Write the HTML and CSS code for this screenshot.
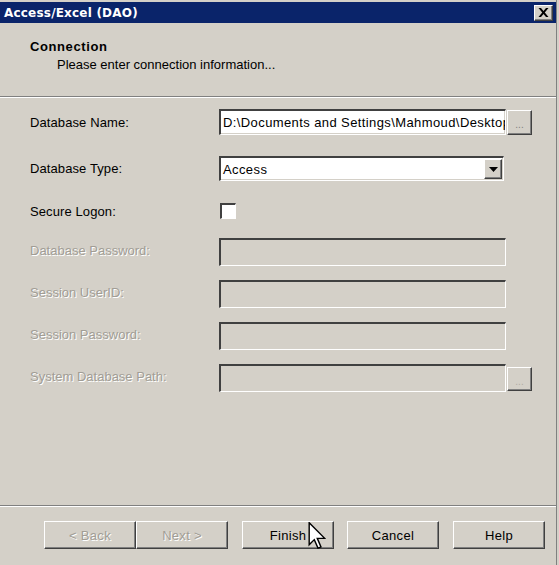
FILE: index.html
```html
<!DOCTYPE html>
<html>
<head>
<meta charset="utf-8">
<link rel="stylesheet" href="styles.css">
</head>
<body>
<div class="window">
  <div class="titlebar">
    <span class="title">Access/Excel (DAO)</span>
    <span class="close">
      <svg width="11" height="9" viewBox="0 0 11 9"><path d="M0.5 0h2.5l2.5 3L8 0h2.5L6.8 4.5 10.5 9H8L5.5 6 3 9H0.5l3.7-4.5z" fill="#000"/></svg>
    </span>
  </div>
  <div class="header">
    <div class="h-title">Connection</div>
    <div class="h-sub">Please enter connection information...</div>
  </div>
  <div class="sep"></div>
  <div class="form">
    <div class="row r-name">
      <label>Database Name:</label>
      <div class="field"><span class="val">D:\Documents and Settings\Mahmoud\Desktop</span></div>
      <span class="browse">...</span>
    </div>
    <div class="row r-type">
      <label>Database Type:</label>
      <div class="field select"><span class="val">Access</span>
        <span class="drop"><svg width="9" height="5" viewBox="0 0 9 5"><path d="M0 0h9L4.5 5z" fill="#000"/></svg></span>
      </div>
    </div>
    <div class="row r-check">
      <label>Secure Logon:</label>
      <span class="check"></span>
    </div>
    <div class="row r-dis first">
      <label class="dis">Database Password:</label>
      <div class="field disabled"></div>
    </div>
    <div class="row r-dis">
      <label class="dis">Session UserID:</label>
      <div class="field disabled"></div>
    </div>
    <div class="row r-dis">
      <label class="dis">Session Password:</label>
      <div class="field disabled"></div>
    </div>
    <div class="row r-dis">
      <label class="dis">System Database Path:</label>
      <div class="field disabled"></div>
      <span class="browse dis-btn">...</span>
    </div>
  </div>
  <div class="sep bottom"></div>
  <div class="buttons">
    <div class="pair">
      <span class="btn dis">&lt; Back</span>
      <span class="btn dis">Next &gt;</span>
    </div>
    <span class="btn finish">Finish
      <svg class="cursor" width="18" height="27" viewBox="0 0 12 19"><path d="M0.5 0.5v15.5l3.6-3.6 2.6 6 2.1-0.9-2.6-6h5.2z" fill="#fff" stroke="#000" stroke-width="1"/></svg>
    </span>
    <span class="btn">Cancel</span>
    <span class="btn help">Help</span>
  </div>
</div>
</body>
</html>
```
FILE: styles.css
```css
* { box-sizing: border-box; }
html, body { margin: 0; padding: 0; }
body {
  width: 559px;
  height: 565px;
  background: #d4d0c8;
  font-family: "Liberation Sans", Arial, sans-serif;
  font-size: 13px;
  color: #000;
  overflow: hidden;
}
.window {
  width: 557px;
  height: 565px;
  border-right: 1px solid #808080;
  display: flex;
  flex-direction: column;
  background: #d4d0c8;
}
.titlebar {
  height: 23px;
  flex: none;
  background: #0a246a;
  border-top: 2px solid #d4d0c8;
  display: flex;
  align-items: center;
  justify-content: space-between;
  padding: 0 3px 0 4px;
}
.title {
  color: #fff;
  font-family: "DejaVu Sans", sans-serif;
  font-weight: bold;
  font-size: 12px;
  letter-spacing: 0.2px;
}
.close {
  width: 19px;
  height: 16px;
  background: #d4d0c8;
  border-top: 1px solid #fff;
  border-left: 1px solid #fff;
  border-right: 1px solid #404040;
  border-bottom: 1px solid #404040;
  box-shadow: inset -1px -1px 0 #808080;
  display: flex;
  align-items: center;
  justify-content: center;
}
.header {
  height: 73px;
  flex: none;
  padding: 16px 0 0 30px;
}
.h-title {
  font-weight: bold;
  font-size: 13px;
  line-height: 16px;
  letter-spacing: 0.6px;
}
.h-sub {
  padding-left: 27px;
  line-height: 19px;
}
.sep {
  height: 2px;
  flex: none;
  border-top: 1px solid #808080;
  border-bottom: 1px solid #fff;
}
.form {
  padding: 11px 0 0 30px;
  flex: 1;
  display: flex;
  flex-direction: column;
}
.row {
  display: grid;
  grid-template-columns: 189px 287px 26px;
  align-items: center;
}
label { letter-spacing: 0.1px; }
label.dis { letter-spacing: 0; margin-top: -3px; }
label.dis, .btn.dis {
  color: #a19d95;
  text-shadow: 1px 1px 0 #fff;
}
.field {
  height: 26px;
  background: #fff;
  border-top: 2px solid #404040;
  border-left: 2px solid #404040;
  border-bottom: 1px solid #fff;
  border-right: 1px solid #fff;
  box-shadow: inset -1px -1px 0 #d4d0c8;
  display: flex;
  align-items: center;
  padding-left: 2px;
  overflow: hidden;
  white-space: nowrap;
  letter-spacing: 0.4px;
}
.select {
  height: 25px;
  width: 285px;
  margin-top: 21px;
  justify-content: space-between;
  padding-right: 1px;
}
.r-type label { margin-top: 21px; }
.drop {
  width: 18px;
  height: 20px;
  background: #d4d0c8;
  border-top: 1px solid #fff;
  border-left: 1px solid #fff;
  border-right: 1px solid #404040;
  border-bottom: 1px solid #404040;
  box-shadow: inset -1px -1px 0 #808080;
  display: flex;
  align-items: center;
  justify-content: center;
}
.browse {
  width: 25px;
  height: 25px;
  margin-left: 1px;
  background: #d4d0c8;
  border-top: 1px solid #fff;
  border-left: 1px solid #fff;
  border-right: 1px solid #404040;
  border-bottom: 1px solid #404040;
  box-shadow: inset -1px -1px 0 #808080;
  font-size: 10px;
  color: #808080;
  display: flex;
  align-items: center;
  justify-content: center;
  padding-top: 4px;
}
.browse.dis-btn { height: 24px; color: #b0aca4; margin-top: 2px; }
.r-check { margin-top: 22px; }
.check {
  width: 16px;
  height: 16px;
  margin-left: 1px;
  background: #fff;
  border-top: 2px solid #404040;
  border-left: 2px solid #404040;
  border-bottom: 1px solid #fff;
  border-right: 1px solid #fff;
}
.r-dis { margin-top: 14px; }
.r-dis.first { margin-top: 19px; }
.field.disabled {
  background: #d4d0c8;
  height: 28px;
}
.buttons {
  height: 58px;
  flex: none;
  display: flex;
  padding: 14px 0 0 44px;
  gap: 13px;
}
.pair { display: flex; }
.btn {
  position: relative;
  width: 92px;
  height: 28px;
  background: #d4d0c8;
  border-top: 1px solid #fff;
  border-left: 1px solid #fff;
  border-right: 1px solid #404040;
  border-bottom: 1px solid #404040;
  box-shadow: inset -1px -1px 0 #808080;
  display: flex;
  align-items: center;
  justify-content: center;
  letter-spacing: 0.3px;
}
.btn.finish { margin-left: 1px; }
.btn.help { margin-left: 1px; }
.cursor {
  position: absolute;
  left: 65px;
  top: 0;
}
```
